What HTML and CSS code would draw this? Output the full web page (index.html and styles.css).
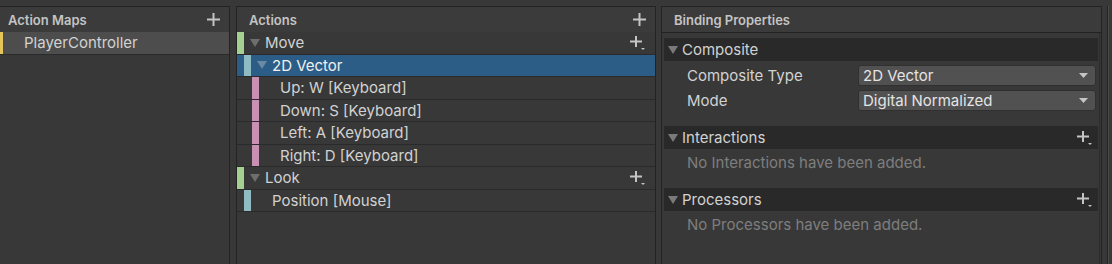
FILE: index.html
```html
<!DOCTYPE html>
<html lang="en">
<head>
    <meta charset="UTF-8">
    <meta name="viewport" content="width=device-width, initial-scale=1.0">
    <title>Input Actions</title>
    <link rel="stylesheet" href="styles.css">
</head>
<body>

<div class="editor">
    <section class="pane pane-maps">
        <div class="pane-head">
            <span class="pane-title">Action Maps</span>
            <svg class="add" width="13" height="13" viewBox="0 0 13 13"><path d="M0 6.5H13M6.5 0V13" /></svg>
        </div>
        <div class="tree">
            <div class="row is-current">
                <span class="bar bar-map"></span>
                <span class="caret-slot"></span>
                <span class="label">PlayerController</span>
            </div>
        </div>
    </section>

    <section class="pane pane-actions">
        <div class="pane-head">
            <span class="pane-title">Actions</span>
            <svg class="add" width="13" height="13" viewBox="0 0 13 13"><path d="M0 6.5H13M6.5 0V13" /></svg>
        </div>
        <div class="tree">
            <div class="row">
                <span class="bar bar-action"></span>
                <span class="caret-slot"><svg class="caret" width="10" height="8" viewBox="0 0 10 8"><polygon points="0,0 10,0 5,8" /></svg></span>
                <span class="label">Move</span>
                <svg class="add-menu" width="16" height="14" viewBox="0 0 16 14"><path d="M0 5.5H12M6 0V11" /><polygon points="11,12 15,12 13,14" /></svg>
            </div>
            <div class="row lvl-1 is-selected">
                <span class="bar bar-binding"></span>
                <span class="caret-slot"><svg class="caret" width="10" height="8" viewBox="0 0 10 8"><polygon points="0,0 10,0 5,8" /></svg></span>
                <span class="label">2D Vector</span>
            </div>
            <div class="row lvl-2">
                <span class="bar bar-part"></span>
                <span class="caret-slot"></span>
                <span class="label">Up: W [Keyboard]</span>
            </div>
            <div class="row lvl-2">
                <span class="bar bar-part"></span>
                <span class="caret-slot"></span>
                <span class="label">Down: S [Keyboard]</span>
            </div>
            <div class="row lvl-2">
                <span class="bar bar-part"></span>
                <span class="caret-slot"></span>
                <span class="label">Left: A [Keyboard]</span>
            </div>
            <div class="row lvl-2">
                <span class="bar bar-part"></span>
                <span class="caret-slot"></span>
                <span class="label">Right: D [Keyboard]</span>
            </div>
            <div class="row">
                <span class="bar bar-action"></span>
                <span class="caret-slot"><svg class="caret" width="10" height="8" viewBox="0 0 10 8"><polygon points="0,0 10,0 5,8" /></svg></span>
                <span class="label">Look</span>
                <svg class="add-menu" width="16" height="14" viewBox="0 0 16 14"><path d="M0 5.5H12M6 0V11" /><polygon points="11,12 15,12 13,14" /></svg>
            </div>
            <div class="row lvl-1">
                <span class="bar bar-binding"></span>
                <span class="caret-slot"></span>
                <span class="label">Position [Mouse]</span>
            </div>
        </div>
    </section>

    <section class="pane pane-props">
        <div class="pane-head head-lined">
            <span class="pane-title">Binding Properties</span>
        </div>
        <div class="props">
            <div class="fold">
                <div class="fold-head">
                    <svg class="caret" width="10" height="8" viewBox="0 0 10 8"><polygon points="0,0 10,0 5,8" /></svg>
                    <span>Composite</span>
                </div>
                <div class="fold-body fields">
                    <div class="field">
                        <span class="field-label">Composite Type</span>
                        <div class="dropdown">
                            <span>2D Vector</span>
                            <svg width="9" height="5" viewBox="0 0 9 5"><polygon points="0,0 9,0 4.5,5" /></svg>
                        </div>
                    </div>
                    <div class="field">
                        <span class="field-label">Mode</span>
                        <div class="dropdown">
                            <span>Digital Normalized</span>
                            <svg width="9" height="5" viewBox="0 0 9 5"><polygon points="0,0 9,0 4.5,5" /></svg>
                        </div>
                    </div>
                </div>
            </div>
            <div class="fold">
                <div class="fold-head">
                    <svg class="caret" width="10" height="8" viewBox="0 0 10 8"><polygon points="0,0 10,0 5,8" /></svg>
                    <span>Interactions</span>
                    <svg class="add-menu" width="16" height="14" viewBox="0 0 16 14"><path d="M0 5.5H12M6 0V11" /><polygon points="11,12 15,12 13,14" /></svg>
                </div>
                <div class="fold-body">
                    <p class="empty">No Interactions have been added.</p>
                </div>
            </div>
            <div class="fold">
                <div class="fold-head">
                    <svg class="caret" width="10" height="8" viewBox="0 0 10 8"><polygon points="0,0 10,0 5,8" /></svg>
                    <span>Processors</span>
                    <svg class="add-menu" width="16" height="14" viewBox="0 0 16 14"><path d="M0 5.5H12M6 0V11" /><polygon points="11,12 15,12 13,14" /></svg>
                </div>
                <div class="fold-body">
                    <p class="empty">No Processors have been added.</p>
                </div>
            </div>
        </div>
    </section>

    <div class="edge"></div>
</div>

</body>
</html>
```

FILE: styles.css
```css
html, body {
    margin: 0;
    height: 100%;
    overflow: hidden;
}
body {
    background-color: #383838;
    color: #d2d2d2;
    font-family: Inter, "Noto Sans", sans-serif;
    font-size: 15px;
}
.editor {
    display: flex;
    padding-top: 6px;
    height: 100%;
    box-sizing: border-box;
}
.pane {
    flex-shrink: 0;
    box-sizing: border-box;
    border: 1px solid #232323;
    border-bottom: none;
    background-color: #383838;
    display: flex;
    flex-direction: column;
}
.pane-maps {
    width: 235px;
    margin-left: -5px;
}
.pane-actions {
    width: 420px;
    margin-left: 6px;
}
.pane-props {
    width: 441px;
    margin-left: 5px;
}
.edge {
    width: 1px;
    margin-left: 5px;
    border-left: 1px solid #242424;
    background-color: #4a4a4a;
}

/* pane headers */
.pane-head {
    height: 25px;
    flex-shrink: 0;
    display: flex;
    align-items: center;
    justify-content: space-between;
    padding: 0 9px 0 12px;
    background-color: #3b3b3b;
}
.head-lined {
    border-bottom: 1px solid #232323;
}
.pane-title {
    font-size: 13px;
    font-weight: 600;
    color: #c4c4c4;
}
.add path {
    stroke: #c4c4c4;
    stroke-width: 2;
}
.add-menu {
    margin-left: auto;
}
.add-menu path {
    stroke: #c4c4c4;
    stroke-width: 2;
}
.add-menu polygon {
    fill: #c4c4c4;
}

/* tree rows */
.row {
    height: 21.5px;
    display: flex;
    align-items: center;
    border-bottom: 1px solid #2a2a2a;
    padding-right: 9px;
}
.lvl-1 {
    padding-left: 7px;
}
.lvl-2 {
    padding-left: 15px;
}
.row.is-current {
    background-color: #4d4d4d;
}
.row.is-selected {
    background-color: #2c5d87;
    color: #f0f0f0;
}
.bar {
    width: 7px;
    align-self: stretch;
    flex-shrink: 0;
}
.bar-map {
    background-color: #e4c55a;
}
.bar-action {
    background-color: #a4d092;
}
.bar-binding {
    background-color: #8fbbc3;
}
.bar-part {
    background-color: #ca90b4;
}
.caret-slot {
    width: 21px;
    flex-shrink: 0;
    display: flex;
    align-items: center;
    padding-left: 6px;
    box-sizing: border-box;
}
.caret polygon {
    fill: #6e6e6e;
}
.is-selected .caret polygon {
    fill: #6a89a5;
}

/* binding properties */
.props {
    flex: 1;
    padding: 5px 0 0 2px;
    margin-right: 1px;
    border-right: 1px solid #2c2c2c;
}
.fold-head {
    height: 23px;
    display: flex;
    align-items: center;
    padding: 0 5px 0 4px;
    background-color: #292929;
    margin-right: 1px;
}
.fold-head .caret {
    margin-right: 4px;
}
.fold-head .caret polygon {
    fill: #7a7a7a;
}
.fold-body {
    padding: 4px 0 15px;
}
.fields {
    display: flex;
    flex-direction: column;
    gap: 4px;
}
.field {
    height: 21px;
    display: flex;
    align-items: center;
    padding-left: 23px;
}
.field-label {
    width: 171px;
    flex-shrink: 0;
}
.dropdown {
    flex: 1;
    height: 100%;
    margin-right: 3px;
    box-sizing: border-box;
    display: flex;
    align-items: center;
    justify-content: space-between;
    padding: 0 7px 0 4px;
    background-color: #515151;
    border: 1px solid #303030;
    border-radius: 3px;
    color: #e4e4e4;
}
.dropdown polygon {
    fill: #c4c4c4;
}
.empty {
    margin: 0;
    height: 20px;
    line-height: 20px;
    padding-left: 23px;
    color: #7e7e7e;
}
```
